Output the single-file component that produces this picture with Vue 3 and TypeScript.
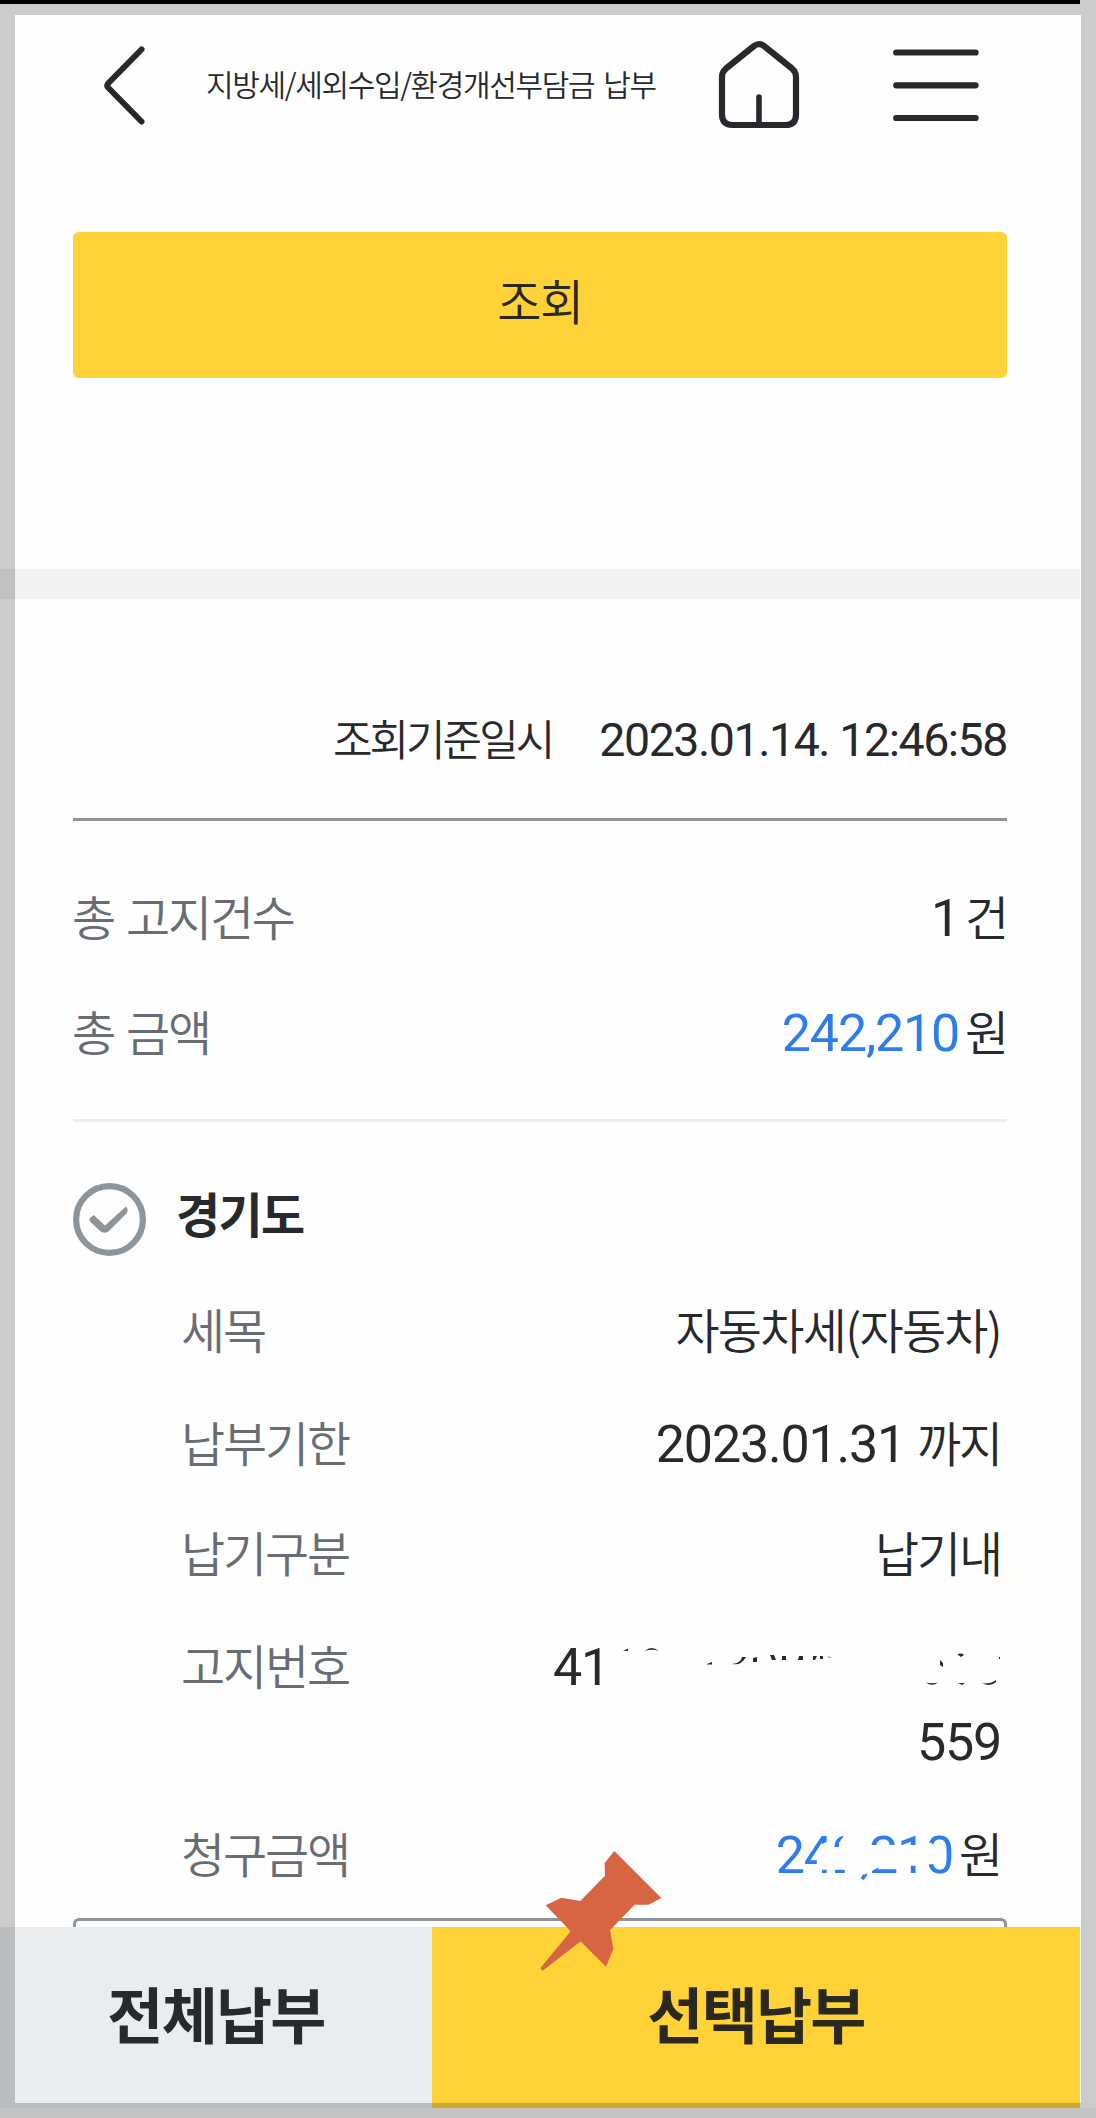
<script setup lang="ts">
interface DetailRow {
  label: string
  num?: string
  text?: string
  kind?: 'notice' | 'amount' | 'item'
}

const details: DetailRow[] = [
  { label: '세목', text: '자동차세(자동차)', kind: 'item' },
  { label: '납부기한', num: '2023.01.31', text: ' 까지' },
  { label: '납기구분', text: '납기내' },
  { label: '고지번호', kind: 'notice' },
  { label: '청구금액', num: '242,210', text: '원', kind: 'amount' },
]
</script>

<template>
  <div class="screen">
    <div class="status"></div>
    <header class="top">
      <svg class="back" width="44" height="84" viewBox="0 0 44 84" fill="none">
        <path d="M38.5 6.5L5.5 40Q3 42.500 5.500 45L38.500 78.500" stroke="#27292c" stroke-width="6" stroke-linecap="round" />
      </svg>
      <h1 class="title">지방세/세외수입/환경개선부담금 납부</h1>
      <svg class="home" width="82" height="90" viewBox="0 0 82 90" fill="none" stroke="#27292c" stroke-width="6.2">
        <path d="M36 7Q41 3.200 46 7L74 29.500Q78 33 78 38V75.500Q78 86 67.500 86H14.500Q4 86 4 75.500V38Q4 33 8 29.500Z" />
        <path d="M41 58V86" stroke-width="5.6" stroke-linecap="round" />
      </svg>
      <svg class="menu" width="86" height="72" viewBox="0 0 86 72" stroke="#27292c" stroke-width="6.2" stroke-linecap="round">
        <path d="M3.200 3.500H82.600M3.200 36.300H82.600M3.200 69.100H82.600" />
      </svg>
    </header>

    <section class="search">
      <button class="query">조회</button>
    </section>
    <div class="band"></div>

    <main class="content">
      <div class="stamp">
        <span class="stamp-label">조회기준일시</span>
        <span class="num stamp-num">2023.01.14. 12:46:58</span>
      </div>
      <dl class="summary">
        <div class="sum-row">
          <dt>총 고지건수</dt>
          <dd><span class="num">1</span><span class="unit">건</span></dd>
        </div>
        <div class="sum-row">
          <dt>총 금액</dt>
          <dd><span class="num blue">242,210</span><span class="unit">원</span></dd>
        </div>
      </dl>
      <div class="region">
        <svg width="73" height="73" viewBox="0 0 73 73">
          <circle cx="36.500" cy="36.500" r="33.400" fill="none" stroke="#8d959b" stroke-width="6.200" />
          <path d="M20.700 32L32 42.500L53 23.500Q56 27 53.500 30.500L36.500 47.500Q31.500 52 26.500 47.500L17 38.500Q15.500 36.500 17 35Z" fill="#8d959b" />
        </svg>
        <h2>경기도</h2>
      </div>
      <dl class="details">
        <div v-for="row in details" :key="row.label" class="row" :class="row.kind">
          <dt>{{ row.label }}</dt>
          <dd v-if="row.kind === 'notice'">
            <div class="notice-line">
              <span class="num">41</span>
              <svg width="392" height="46" viewBox="-2 0 392 46" fill="#27292c">
                <path d="M12 7L17 4.500V7ZM34 7Q40 1 48 7Q41 4.500 34 7ZM96 20L101 18V20.500H96ZM121 20Q130 22 135 13L131 13Q130 19 121 20ZM142 18V14L146 13V18ZM159 11H163L165 16H161ZM171 12H175V16H171ZM187 16L188 12H192V16ZM202 12H206L204 16H202ZM209 12H212V15H209ZM216 12L221 14L218 13.500ZM329 16L332 19V23L329 21ZM346 10L351 9.500L353 11L350 13ZM388 13H389V15H388ZM315 38.500Q321 43 327 38.500Q321 40 315 38.500ZM347 39H354L351 41ZM371 39.500Q380 40 385 36V38Q380 43 371 39.500Z" />
              </svg>
            </div>
            <div class="num">559</div>
          </dd>
          <dd v-else>
            <span v-if="row.num" class="num" :class="{ blue: row.kind === 'amount' }">{{ row.num }}</span>
            <span :class="{ unit: row.kind === 'amount' }">{{ row.text }}</span>
            <svg v-if="row.kind === 'amount'" class="scrub" width="190" height="52" viewBox="0 0 190 52" fill="#fefefe">
              <path d="M58 11L52 14.300L46.800 21.700L44 27.300L46.800 29.300V39.700H52V46H47V39.700H74.800V44.500H95L108 37.700L126.600 39.300L139.400 35.700H150.400L160.700 34.300L165.500 34V15.700L160.700 12.700L150.400 15H102L95 15V0H78L69 12.700V17.300H58Z" />
            </svg>
          </dd>
        </div>
      </dl>
      <div class="box"></div>
    </main>

    <footer class="actions">
      <button class="all">전체납부</button>
      <button class="selected">선택납부</button>
    </footer>

    <svg class="pin" width="124" height="122" viewBox="0 0 372 366">
      <path d="M226 3L367 144L329 164H287L213 241L223 297L201 350L125 274L11 362L4 355L95 244L20 166L67 143L124 153L198 77L197 39Z" fill="#d76443" />
    </svg>
    <div class="frame"></div>
  </div>
</template>

<style>
body {
  margin: 0;
  background: #fff;
}
</style>

<style scoped>
* {
  box-sizing: border-box;
  margin: 0;
}

.screen {
  position: relative;
  display: flex;
  flex-direction: column;
  width: 1096px;
  height: 2118px;
  overflow: hidden;
  background: linear-gradient(#fefefe 2108px, #f5f5f5 2108px);
  color: #27292c;
  font-family: 'Noto Sans CJK KR', sans-serif;
  font-weight: 350;
  font-size: 48px;
  letter-spacing: -2.2px;
  word-spacing: 3.5px;
}

.status {
  width: 1080px;
  height: 4px;
  flex: none;
  background: #000;
  z-index: 2;
}

.top {
  display: flex;
  align-items: flex-start;
  height: 228px;
  flex: none;
}

.back {
  margin: 39px 0 0 103px;
}

.title {
  margin: 56px 0 0 59px;
  width: 512px;
  font-size: 30px;
  line-height: 46px;
  font-weight: 350;
  letter-spacing: -1.35px;
  white-space: nowrap;
}

.home {
  margin-top: 35px;
  flex: none;
}

.menu {
  margin: 45px 0 0 93px;
  flex: none;
}

.search {
  height: 337px;
  flex: none;
  padding: 0 89px 0 73px;
}

button {
  border: 0;
  padding: 0;
  color: inherit;
  font: inherit;
  letter-spacing: inherit;
}

.query {
  display: block;
  width: 934px;
  height: 146px;
  padding-bottom: 12px;
  border-radius: 6px;
  background: #ffd237;
  color: #2b281f;
  letter-spacing: -1.500px;
}

.band {
  width: 1080px;
  height: 30px;
  flex: none;
  background: #f1f2f4;
}

.content {
  width: 934px;
  height: 1328px;
  flex: none;
  margin-left: 73px;
}

.num {
  font-family: Roboto, sans-serif;
  font-weight: 400;
  font-size: 52px;
  line-height: 1;
  letter-spacing: -1.2px;
  word-spacing: 0;
}

.blue {
  color: #2f7deb;
}

.stamp {
  display: flex;
  justify-content: flex-end;
  align-items: baseline;
  height: 222px;
  padding-top: 105px;
  border-bottom: 3px solid #8d9399;
  line-height: 66px;
}

.stamp-label {
  margin-right: 47px;
  font-size: 43px;
  letter-spacing: -3px;
}

.stamp-num {
  font-size: 46.500px;
  letter-spacing: -1.450px;
}

.summary {
  height: 301px;
  padding-top: 37px;
  border-bottom: 3px solid #ebeced;
}

.sum-row {
  display: flex;
  justify-content: space-between;
  height: 115px;
  line-height: 114px;
}

.sum-row dt {
  margin-left: -1px;
}

dt {
  color: #696d72;
}

dd {
  white-space: nowrap;
}

.unit {
  margin-left: 6px;
}

.region {
  display: flex;
  height: 168px;
  padding-top: 61px;
}

h2 {
  margin: -1px 0 0 30px;
  font-size: 48px;
  line-height: 60px;
  font-weight: 600;
  letter-spacing: -1.7px;
}

.details {
  display: flex;
  flex-direction: column;
  gap: 38px;
  height: 628px;
  padding: 0.500px 6px 0 108px;
}

.row {
  position: relative;
  display: flex;
  justify-content: space-between;
  line-height: 75px;
  text-align: right;
}

.item dd {
  letter-spacing: -1.700px;
}

.row:nth-child(3) {
  margin-top: -3px;
}

.notice-line {
  display: flex;
  align-items: center;
  height: 75px;
}

.notice dd {
  padding-top: 3px;
  margin-bottom: -3px;
}

.notice .num {
  line-height: 75px;
}

.scrub {
  position: absolute;
  right: 41px;
  top: 15.500px;
}

.box {
  height: 20px;
  border: 3px solid #8d959b;
  border-bottom: 0;
  border-radius: 6px 6px 0 0;
}

.actions {
  display: flex;
  width: 1080px;
  height: 181px;
  flex: none;
  z-index: 1;
}

.actions button {
  padding-bottom: 11px;
  font-size: 61px;
  font-weight: 700;
  letter-spacing: -1.8px;
}

.all {
  width: 432px;
  background: #e9edf0;
}

.selected {
  width: 648px;
  background: #ffd237;
  color: #2b281f;
}

.pin {
  position: absolute;
  left: 538.700px;
  top: 1850px;
  z-index: 2;
}

.frame {
  position: absolute;
  inset: 0;
  z-index: 1;
  border: 15px solid rgba(0, 0, 0, 0.2);
}
</style>
